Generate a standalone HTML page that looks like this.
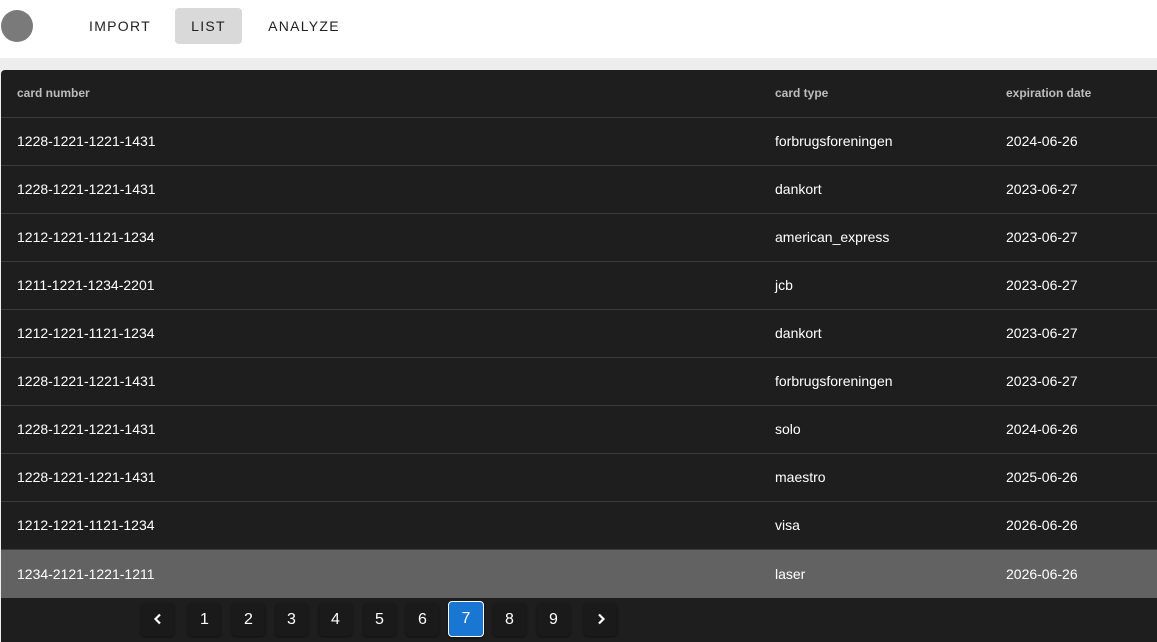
<!DOCTYPE html><html><head><style>
body{margin:0;width:1157px;height:642px;overflow:hidden;background:#eee;font-family:"Liberation Sans",sans-serif;}
.hdr{height:58px;background:#fff;position:relative}
.av{position:absolute;left:1px;top:10px;width:32px;height:32px;border-radius:50%;background:#7a7a7a}
.nav{position:absolute;top:8px;height:36px;line-height:36px;font-size:14px;letter-spacing:1.3px;color:#222;text-align:center}
.tbl{position:absolute;left:1px;top:70px;width:1156px;height:572px;background:#1e1e1e;border-radius:4px 0 0 0;color:#fff;font-size:14px}
.row{height:47px;border-bottom:1px solid #3a3a3a;position:relative;line-height:47px}
.row span{position:absolute}
.c1{left:16px}.c2{left:774px}.c3{left:1005px}
.h{font-size:12px;font-weight:bold;color:#bdbdbd}
.sel{background:#626262;border-bottom:none;height:48px;line-height:48px}
.pg{position:absolute;top:533px;width:33px;height:33px;line-height:33px;text-align:center;background:#1a1a1a;border-radius:4px;font-size:16px;box-shadow:0 1px 2px rgba(0,0,0,.5)}
.act{background:#1976d2;border:1.5px solid #fff;width:34px;height:34px;line-height:34px;top:531px}
</style></head><body>
<div class="hdr"><div class="av"></div>
<div class="nav" style="left:80px;width:80px">IMPORT</div>
<div class="nav" style="left:175px;width:67px;background:#d9d9d9;border-radius:4px">LIST</div>
<div class="nav" style="left:258px;width:92px">ANALYZE</div></div>
<div class="tbl">
<div class="row h"><span class="c1">card number</span><span class="c2">card type</span><span class="c3">expiration date</span></div>
<div class="row"><span class="c1">1228-1221-1221-1431</span><span class="c2">forbrugsforeningen</span><span class="c3">2024-06-26</span></div>
<div class="row"><span class="c1">1228-1221-1221-1431</span><span class="c2">dankort</span><span class="c3">2023-06-27</span></div>
<div class="row"><span class="c1">1212-1221-1121-1234</span><span class="c2">american_express</span><span class="c3">2023-06-27</span></div>
<div class="row"><span class="c1">1211-1221-1234-2201</span><span class="c2">jcb</span><span class="c3">2023-06-27</span></div>
<div class="row"><span class="c1">1212-1221-1121-1234</span><span class="c2">dankort</span><span class="c3">2023-06-27</span></div>
<div class="row"><span class="c1">1228-1221-1221-1431</span><span class="c2">forbrugsforeningen</span><span class="c3">2023-06-27</span></div>
<div class="row"><span class="c1">1228-1221-1221-1431</span><span class="c2">solo</span><span class="c3">2024-06-26</span></div>
<div class="row"><span class="c1">1228-1221-1221-1431</span><span class="c2">maestro</span><span class="c3">2025-06-26</span></div>
<div class="row"><span class="c1">1212-1221-1121-1234</span><span class="c2">visa</span><span class="c3">2026-06-26</span></div>
<div class="row sel"><span class="c1">1234-2121-1221-1211</span><span class="c2">laser</span><span class="c3">2026-06-26</span></div>
<div class="pg" style="left:140px"><svg width="12" height="12" viewBox="0 0 12 12" style="margin-top:10px"><path d="M8 1.5L3.5 6L8 10.5" stroke="#fff" stroke-width="2.2" fill="none"/></svg></div>
<div class="pg" style="left:187px">1</div>
<div class="pg" style="left:231px">2</div>
<div class="pg" style="left:274px">3</div>
<div class="pg" style="left:318px">4</div>
<div class="pg" style="left:362px">5</div>
<div class="pg" style="left:405px">6</div>
<div class="pg act" style="left:447px">7</div>
<div class="pg" style="left:492px">8</div>
<div class="pg" style="left:536px">9</div>
<div class="pg" style="left:583px"><svg width="12" height="12" viewBox="0 0 12 12" style="margin-top:10px"><path d="M4 1.5L8.5 6L4 10.5" stroke="#fff" stroke-width="2.2" fill="none"/></svg></div>
</div>
</body></html>
